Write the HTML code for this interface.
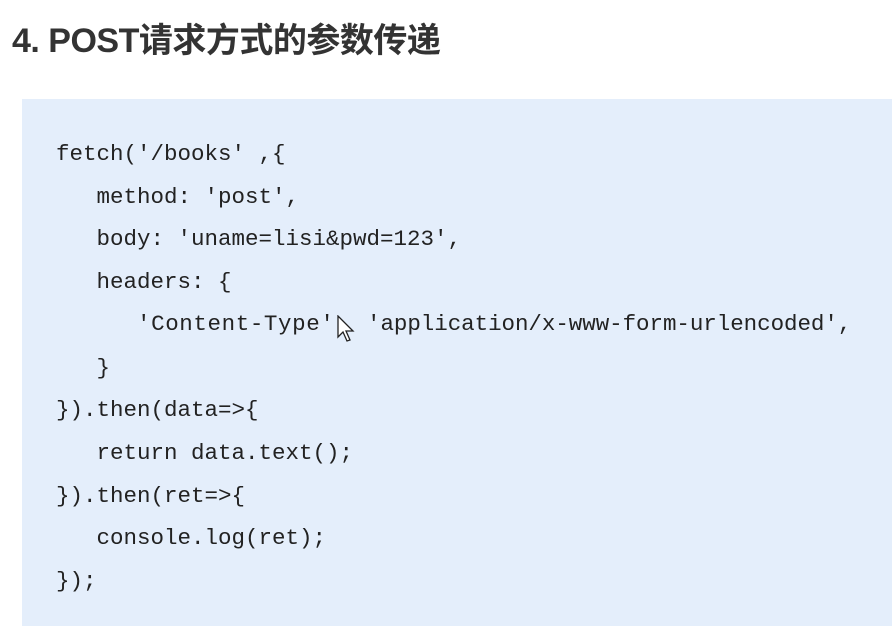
<!DOCTYPE html>
<html><head><meta charset="utf-8"><style>
body{margin:0;width:892px;height:629px;background:#fff;overflow:hidden;position:relative}
h1{position:absolute;left:12px;top:13px;margin:0;font:bold 34px "Liberation Sans","Noto Sans CJK SC",sans-serif;color:#333;letter-spacing:-0.5px}
.box{position:absolute;left:22px;top:99px;width:880px;height:527px;background:#e4eefb}
pre{position:absolute;left:56px;top:133px;margin:0;font:22.5px/42.7px "Liberation Mono",monospace;color:#222}
.c{position:absolute;font:22.5px/42.7px "Liberation Mono",monospace;color:#222;top:303px}
</style></head><body>
<h1>4. POST请求方式的参数传递</h1>
<div class="box"></div>
<pre>fetch('/books' ,{
   method: 'post',
   body: 'uname=lisi&amp;pwd=123',
   headers: {

   }
}).then(data=>{
   return data.text();
}).then(ret=>{
   console.log(ret);
});</pre>
<span class="c" style="left:137px;letter-spacing:0.6px">'Content-Type'</span>
<span class="c" style="left:367px;letter-spacing:-0.05px">'application/x-www-form-urlencoded',</span>
<svg style="position:absolute;left:337px;top:315px" width="18" height="28" viewBox="0 0 18 28"><path d="M1 1 L1 22 L6 17 L10 26 L13 25 L9 16 L16 16 Z" fill="#fff" stroke="#222" stroke-width="1.3"/></svg>
</body></html>
